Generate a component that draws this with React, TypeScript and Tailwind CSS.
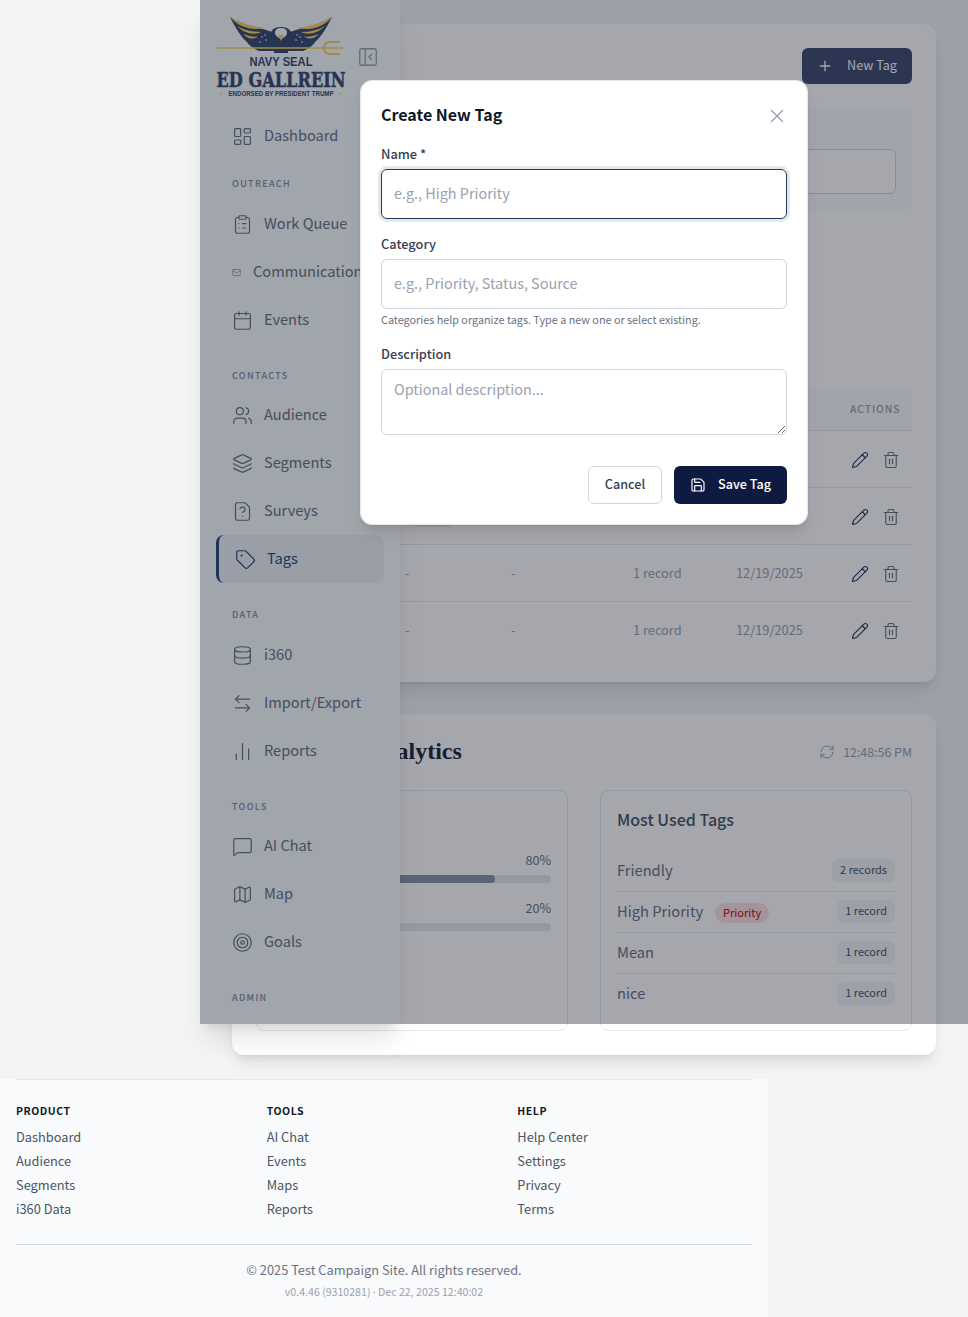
import {
  Calendar,
  ChartNoAxesColumn,
  ClipboardList,
  Database,
  ArrowLeftRight,
  FileQuestion,
  Layers,
  LayoutDashboard,
  Mail,
  MapIcon,
  MessageSquare,
  PanelLeftClose,
  Pencil,
  Plus,
  RefreshCw,
  Save,
  Tag,
  Target,
  Trash2,
  Users,
  X,
  type LucideIcon,
} from 'lucide-react'

interface NavItem {
  label: string
  icon: LucideIcon
  active?: boolean
  iconClass?: string
}

interface NavSection {
  title?: string
  titleClass: string
  items: NavItem[]
}

const NAV: NavSection[] = [
  { titleClass: '', items: [{ label: 'Dashboard', icon: LayoutDashboard }] },
  {
    title: 'OUTREACH',
    titleClass: 'mt-4 mb-2',
    items: [
      { label: 'Work Queue', icon: ClipboardList },
      { label: 'Communications', icon: Mail, iconClass: 'mr-px h-[9px] w-[9px]' },
      { label: 'Events', icon: Calendar },
    ],
  },
  {
    title: 'CONTACTS',
    titleClass: 'mt-6 mb-[7px]',
    items: [
      { label: 'Audience', icon: Users },
      { label: 'Segments', icon: Layers },
      { label: 'Surveys', icon: FileQuestion },
      { label: 'Tags', icon: Tag, active: true },
    ],
  },
  {
    title: 'DATA',
    titleClass: 'mt-6 mb-2',
    items: [
      { label: 'i360', icon: Database },
      { label: 'Import/Export', icon: ArrowLeftRight },
      { label: 'Reports', icon: ChartNoAxesColumn },
    ],
  },
  {
    title: 'TOOLS',
    titleClass: 'mt-6 mb-[7px]',
    items: [
      { label: 'AI Chat', icon: MessageSquare },
      { label: 'Map', icon: MapIcon },
      { label: 'Goals', icon: Target },
    ],
  },
  { title: 'ADMIN', titleClass: 'mt-6 mb-2', items: [] },
]

// the first two rows sit under the modal, only their actions and the pill edge show
const TABLE_ROWS = [
  { id: 'friendly' },
  { id: 'high-priority', pill: true },
  { id: 'mean', cells: true },
  { id: 'nice', cells: true },
]

const USED_TAGS = [
  { name: 'Friendly', count: '2 records' },
  { name: 'High Priority', category: 'Priority', count: '1 record' },
  { name: 'Mean', count: '1 record' },
  { name: 'nice', count: '1 record' },
]

const FOOTER_COLUMNS = [
  { title: 'PRODUCT', links: ['Dashboard', 'Audience', 'Segments', 'i360 Data'] },
  { title: 'TOOLS', links: ['AI Chat', 'Events', 'Maps', 'Reports'] },
  { title: 'HELP', links: ['Help Center', 'Settings', 'Privacy', 'Terms'] },
]

function Wing() {
  return (
    <g>
      <path d="M14 2C20 6 34 12 47 14L56 17V36H43C36 33 33 30 31 27C25 22 19 12 14 2Z" fill="#3a4a72" />
      <path d="M14 2C22 7 34 11 49 13C38 16 23 13 14 2Z" fill="#fbd35b" />
      <path d="M21 11C28 15 36 17 45 17C38 20.5 28 18.5 21 11Z" fill="#fbd35b" />
      <path d="M27 19C32 21 37 22 42 21.5C37 25 32 24 27 19Z" fill="#fbd35b" />
      <circle cx="46" cy="22" r="0.8" fill="#fff" />
      <circle cx="50" cy="25" r="0.8" fill="#fff" />
      <circle cx="44" cy="27" r="0.8" fill="#fff" />
      <circle cx="49" cy="20" r="0.8" fill="#fff" />
    </g>
  )
}

function Logo() {
  return (
    <svg width="130" height="84" viewBox="0 0 130 84" className="block shrink-0">
      <Wing />
      <g transform="matrix(-1 0 0 1 130 0)">
        <Wing />
      </g>
      <path d="M55 17C57 13 61 12 65 12C69 12 73 13 75 17L79 36H72V38H58V36H51Z" fill="#3a4a72" />
      <path d="M59 18C59 14 62 13 65 13C68 13 71 14 71 18C71 21 67 23 65 24C63 23 59 21 59 18Z" fill="#fff" />
      <path d="M62 20H68L65 26Z" fill="#fbd35b" />
      <path d="M1 33H127" stroke="#fbd35b" strokeWidth="1.7" />
      <path d="M124 27H114C110 27 108 29 108 33C108 37 110 39 114 39H124" stroke="#fbd35b" strokeWidth="1.8" fill="none" />
      <text x="65" y="51" textAnchor="middle" textLength="63" lengthAdjust="spacingAndGlyphs" fontFamily="'Liberation Sans', sans-serif" fontWeight="700" fontSize="12.5" fill="#3a4a72">
        NAVY SEAL
      </text>
      <text x="65" y="71.5" textAnchor="middle" textLength="129" lengthAdjust="spacingAndGlyphs" fontFamily="'DejaVu Serif', serif" fontWeight="700" fontSize="21" stroke="#3a4a72" strokeWidth="0.5" fill="#3a4a72">
        ED GALLREIN
      </text>
      <text x="65" y="81" textAnchor="middle" textLength="105" lengthAdjust="spacingAndGlyphs" fontFamily="'Liberation Sans', sans-serif" fontWeight="700" fontSize="6.5" fill="#3a4a72">
        ENDORSED BY PRESIDENT TRUMP
      </text>
      <circle cx="5" cy="78.5" r="1" fill="#fbd35b" />
      <circle cx="124" cy="78.5" r="1" fill="#fbd35b" />
    </svg>
  )
}

function Sidebar() {
  return (
    <aside className="absolute left-[200px] top-0 h-[1024px] w-[200px] bg-[#f8fdfd] px-4 shadow-xl">
      <div className="flex h-[112px] items-start pt-[15px]">
        <Logo />
        <button className="mt-[31px] ml-[11px] text-gray-400">
          <PanelLeftClose size={22} strokeWidth={1.4} />
        </button>
      </div>
      {NAV.map((section, i) => (
        <div key={i}>
          {section.title && (
            <div className={`h-4 pl-4 text-[9px] leading-4 font-medium tracking-[0.15em] text-[#838b99] ${section.titleClass}`}>
              {section.title}
            </div>
          )}
          {section.items.map(({ label, icon: Icon, active, iconClass }) => (
            <div
              key={label}
              className={`flex h-12 w-[168px] items-center gap-[11px] whitespace-nowrap rounded-lg pl-4 text-[14.6px] ${
                active ? 'border-l-[3px] border-[#2b4a7f] bg-[#eef1f4] text-[#2b4a7f]' : 'text-gray-500'
              }`}
            >
              <Icon strokeWidth={1.4} className={`shrink-0 ${iconClass ?? 'h-[21px] w-[21px]'}`} />
              <span className="-mt-[3px]">{label}</span>
            </div>
          ))}
        </div>
      ))}
    </aside>
  )
}

function TagsCard() {
  return (
    <section className="rounded-xl bg-white px-6 pt-6 pb-[23px] shadow-lg">
      <div className="flex h-9 items-center justify-end">
        <button className="flex h-9 w-[110px] items-center justify-center gap-[14px] rounded-md bg-[#404c71] text-[12.6px] text-white">
          <Plus size={16} />
          <span className="pb-[2px]">New Tag</span>
        </button>
      </div>
      <div className="mt-6 h-[102px] rounded-lg bg-gray-50 px-4 pt-[41px]">
        <div className="h-[45px] rounded-md border border-gray-300 bg-white" />
      </div>
      <div className="mt-[180px]">
        <div className="grid h-[41px] grid-cols-[618px_1fr] items-center border-b border-gray-200 bg-gray-50 pb-[2px] text-[10.2px] font-medium tracking-[0.1em] text-gray-400">
          <span />
          <span className="-ml-[24px]">ACTIONS</span>
        </div>
        {TABLE_ROWS.map((row) => (
          <div
            key={row.id}
            className="grid h-[57px] grid-cols-[149px_106px_122px_103px_114px_1fr] items-center border-b border-gray-200 text-[12.8px] text-gray-400 last:border-transparent"
          >
            <span />
            {row.pill ? (
              <span className="ml-[3px] h-[22px] w-[49px] rounded-full bg-red-100" />
            ) : (
              <span>{row.cells ? '-' : ''}</span>
            )}
            <span>{row.cells ? '-' : ''}</span>
            <span>{row.cells ? '1 record' : ''}</span>
            <span>{row.cells ? '12/19/2025' : ''}</span>
            <div className="mt-px flex items-center gap-[13px] pl-px">
              <Pencil size={18} strokeWidth={1.5} className="text-[#26375f]" />
              <Trash2 size={18} strokeWidth={1.5} className="text-gray-500" />
            </div>
          </div>
        ))}
      </div>
    </section>
  )
}

function AnalyticsCard() {
  return (
    <section className="mt-8 rounded-xl bg-white p-6 shadow-lg">
      <div className="flex h-7 items-center justify-between">
        <h2 className="pb-[2px] font-['Liberation_Serif',serif] text-2xl font-bold text-gray-800">Tag Usage Analytics</h2>
        <div className="flex items-center gap-2 text-[12.4px] text-gray-400">
          <RefreshCw size={16} strokeWidth={1.5} />
          12:48:56 PM
        </div>
      </div>
      <div className="mt-6 grid grid-cols-2 gap-8">
        <div className="h-[241px] rounded-lg border border-gray-200 px-4 pt-[59px]">
          <div className="text-right text-[12.6px] leading-5 text-gray-500">80%</div>
          <div className="mt-[5px] h-2 rounded-full bg-gray-200">
            <div className="h-2 rounded-full bg-[#8b94a8]" style={{ width: '80%' }} />
          </div>
          <div className="mt-[15px] text-right text-[12.6px] leading-5 text-gray-500">20%</div>
          <div className="mt-[5px] h-2 rounded-full bg-gray-200" />
        </div>
        <div className="h-[241px] rounded-lg border border-gray-200 p-4">
          <h3 className="mb-[20px] text-base leading-6 font-medium text-gray-600">Most Used Tags</h3>
          {USED_TAGS.map((tag) => (
            <div
              key={tag.name}
              className="flex h-[41px] items-center justify-between border-b border-gray-200 pb-[2px] text-[14.7px] text-gray-500 last:border-transparent"
            >
              <div className="flex items-center gap-3">
                <span>{tag.name}</span>
                {tag.category && (
                  <span className="mt-1 flex h-5 items-center rounded-full bg-red-100 px-2 pb-px text-[11px] text-red-700">
                    {tag.category}
                  </span>
                )}
              </div>
              <span className="mt-px flex h-[23px] items-center rounded-md bg-gray-100 px-2 pb-[2px] text-[11px] text-gray-600">{tag.count}</span>
            </div>
          ))}
        </div>
      </div>
    </section>
  )
}

function CreateTagModal() {
  return (
    <div className="absolute left-[160px] top-[80px] w-[448px] rounded-xl border border-gray-200 bg-white p-5 shadow-lg">
      <div className="flex h-7 items-center justify-between">
        <h2 className="-mt-[3px] text-base font-semibold text-gray-900">Create New Tag</h2>
        <X size={22} strokeWidth={1.5} className="mt-[2px] -mr-px text-gray-400" />
      </div>
      <label className="mt-[15px] block text-[12.8px] font-medium leading-5 text-gray-700">Name *</label>
      <input
        placeholder="e.g., High Priority"
        className="mt-[5px] block h-[50px] w-full rounded-md border border-[#1e3a5f] px-3 pb-[3px] text-[14.4px] ring-[3px] ring-gray-200 outline-none placeholder:text-gray-400"
      />
      <label className="mt-[15px] block text-[12.8px] font-medium leading-5 text-gray-700">Category</label>
      <input
        placeholder="e.g., Priority, Status, Source"
        className="mt-[5px] block h-[50px] w-full rounded-md border border-gray-300 px-3 pb-[3px] text-[14.4px] outline-none placeholder:text-gray-400"
      />
      <p className="mt-[2px] text-[10.8px] leading-4 text-gray-500">Categories help organize tags. Type a new one or select existing.</p>
      <label className="mt-[17px] block text-[12.8px] font-medium leading-5 text-gray-700">Description</label>
      <textarea
        placeholder="Optional description..."
        className="mt-[5px] block h-[66px] w-full rounded-md border border-gray-300 px-3 py-2 text-[14.4px] outline-none placeholder:text-gray-400"
      />
      <div className="mt-[31px] flex justify-end gap-3">
        <button className="h-[38px] w-[74px] rounded-md border border-gray-300 bg-white pb-[2px] text-[12.6px] font-medium text-gray-700">
          Cancel
        </button>
        <button className="flex h-[38px] w-[113px] items-center justify-center gap-3 rounded-md bg-[#0f1a40] text-[12.6px] font-medium text-white">
          <Save size={16} strokeWidth={1.75} />
          <span className="pb-[2px]">Save Tag</span>
        </button>
      </div>
    </div>
  )
}

function Footer() {
  return (
    <footer className="mt-6 w-[768px] bg-[#f9fafb] px-4 pb-[17px]">
      <div className="border-t border-gray-200 pt-[23px]">
        <div className="grid grid-cols-3 gap-4">
          {FOOTER_COLUMNS.map((col) => (
            <div key={col.title}>
              <h4 className="mb-[6px] text-[10.5px] leading-4 font-semibold tracking-[0.05em] text-gray-900">{col.title}</h4>
              {col.links.map((link) => (
                <div key={link} className="text-[12.8px] leading-6 text-gray-600">
                  {link}
                </div>
              ))}
            </div>
          ))}
        </div>
      </div>
      <div className="mt-[23px] border-t border-gray-300 pt-[15px] text-center">
        <p className="text-[12.8px] leading-5 text-gray-500">© 2025 Test Campaign Site. All rights reserved.</p>
        <p className="mt-1 text-[10.6px] leading-4 text-gray-400">
          v0.4.46 (9310281) <span className="font-['Noto_Sans',sans-serif]">·</span> Dec 22, 2025 12:40:02
        </p>
      </div>
    </footer>
  )
}

export default function App() {
  return (
    <div className="relative min-h-[1317px] w-[968px] overflow-hidden bg-[#f3f4f6] font-['Noto_Sans_CJK_SC','Noto_Sans',sans-serif]">
      <main className="pt-6 pr-8 pl-[232px]">
        <TagsCard />
        <AnalyticsCard />
      </main>
      <Footer />
      <Sidebar />
      <div className="absolute left-[200px] top-0 h-[1024px] w-[768px] bg-[#0a1020]/[0.37]">
        <CreateTagModal />
      </div>
    </div>
  )
}
